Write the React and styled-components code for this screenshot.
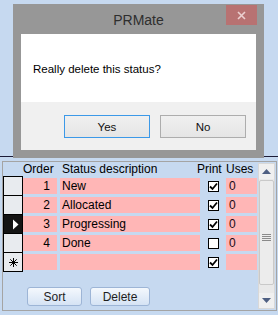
import React from "react";
import styled, { createGlobalStyle } from "styled-components";

const rows = [
  { order: 1, desc: "New", print: true, uses: 0 },
  { order: 2, desc: "Allocated", print: true, uses: 0 },
  { order: 3, desc: "Progressing", print: true, uses: 0, current: true },
  { order: 4, desc: "Done", print: false, uses: 0 },
];

const GlobalStyle = createGlobalStyle`
  html, body {
    margin: 0;
    padding: 0;
  }
  body {
    background: #c6d9f0;
    font-family: "Liberation Sans", Arial, sans-serif;
    color: #000;
  }
`;

const Screen = styled.div`
  position: relative;
  width: 278px;
  height: 315px;
  overflow: hidden;
  background: #c6d9f0;
`;

const FormHeader = styled.div`
  height: 156px;
  border-bottom: 1px solid #1c1c38;
`;

const SubForm = styled.div`
  box-sizing: border-box;
  display: flex;
  margin: 4px 1px 0 2px;
  height: 150px;
  border: 1px solid #a4a4a4;
`;

const Sheet = styled.div`
  flex: 1;
  display: flex;
  flex-direction: column;
  font-size: 12px;
`;

const Row = styled.div`
  display: grid;
  grid-template-columns: 20px 37px 140px 26px 31px;
  height: ${(p) => (p.$head ? "14px" : "19px")};
  align-items: ${(p) => (p.$head ? "center" : "stretch")};
`;

const HeadLabel = styled.div`
  white-space: nowrap;
  line-height: 14px;
  padding-left: ${(p) => p.$pad || 0}px;
  margin-left: ${(p) => p.$shift || 0}px;
`;

const Selector = styled.div`
  box-sizing: border-box;
  display: flex;
  align-items: center;
  justify-content: center;
  padding-left: ${(p) => (p.$current ? "4px" : "0")};
  border-left: 1px solid #000;
  border-right: 1px solid #000;
  border-top: 1px solid #000;
  border-bottom: ${(p) => (p.$last ? "1px solid #000" : "none")};
  height: ${(p) => (p.$last ? "20px" : "19px")};
  background: ${(p) => (p.$current ? "#141414" : "#e8ebef")};
`;

const Cell = styled.div`
  box-sizing: border-box;
  margin-top: 2px;
  height: 16px;
  line-height: 16px;
  background: #ffb6b6;
  white-space: nowrap;
  overflow: hidden;
`;

const OrderCell = styled(Cell)`
  margin-right: 3px;
  text-align: right;
  padding-right: 7px;
`;

const DescCell = styled(Cell)`
  padding-left: 2px;
`;

const UsesCell = styled(Cell)`
  padding-left: 3px;
  color: #1a0a14;
`;

const PrintCell = styled.div`
  display: flex;
  justify-content: center;
  padding-left: 1px;
  margin-top: 5px;
`;

const Box = styled.div`
  box-sizing: border-box;
  width: 11px;
  height: 11px;
  border: 1px solid #000;
  background: #fff;
  display: flex;
  align-items: center;
  justify-content: center;
`;

const ButtonBar = styled.div`
  display: flex;
  gap: 8px;
  margin: 16px 0 0 24px;
`;

const FormButton = styled.button`
  box-sizing: border-box;
  width: ${(p) => p.$w}px;
  height: 19px;
  padding: 0;
  border: 1px solid #9db5d6;
  border-radius: 3px;
  background: linear-gradient(#f4f8fd, #d5e3f4);
  font-family: "Liberation Sans", Arial, sans-serif;
  font-size: 12px;
  color: #1e1e1e;
`;

const ScrollBar = styled.div`
  box-sizing: border-box;
  display: flex;
  flex-direction: column;
  width: 17px;
  margin: 1px 1px 1px 0;
  background: #e9e9e9;
  border: 1px solid #d8d8d8;
`;

const ArrowBtn = styled.div`
  height: 15px;
  display: flex;
  align-items: center;
  justify-content: center;
  background: #f0f0f0;
  margin-top: ${(p) => (p.$down ? "auto" : "0")};
`;

const Thumb = styled.div`
  box-sizing: border-box;
  height: 105px;
  margin: 1px 0 0;
  padding-top: 10px;
  border: 1px solid #c9c9c9;
  border-radius: 2px;
  background: #ececec;
  display: flex;
  align-items: center;
  justify-content: center;
`;

const Dialog = styled.div`
  position: absolute;
  left: 13px;
  top: 4px;
  width: 251px;
  height: 154px;
  box-sizing: border-box;
  padding: 0 8px 8px;
  background: #979797;
  display: flex;
  flex-direction: column;
`;

const TitleBar = styled.div`
  display: grid;
  grid-template-columns: 1fr auto 1fr;
  height: 30px;
`;

const Title = styled.div`
  grid-column: 2;
  align-self: center;
  margin-top: 2px;
  font-size: 14px;
  color: #2e2e2e;
`;

const CloseBtn = styled.div`
  grid-column: 3;
  justify-self: end;
  width: 31px;
  height: 20px;
  margin: 1px -1px 0 0;
  background: #b87272;
  display: flex;
  align-items: center;
  justify-content: center;
`;

const Message = styled.div`
  height: 68px;
  background: #fff;
  box-sizing: border-box;
  padding: 28px 0 0 12px;
  font-size: 11.5px;
  line-height: 14px;
`;

const DialogButtons = styled.div`
  flex: 1;
  background: #f0f0f0;
  display: flex;
  justify-content: flex-end;
  gap: 10px;
  padding: 13px 10px 0 0;
`;

const DialogButton = styled.button`
  box-sizing: border-box;
  width: 86px;
  height: 23px;
  padding: 0;
  border: 1px solid ${(p) => (p.$focus ? "#3c99e8" : "#adadad")};
  background: linear-gradient(#f0f0f0, #e5e5e5);
  font-family: "Liberation Sans", Arial, sans-serif;
  font-size: 11.5px;
  color: #111;
`;

const Check = () => (
  <svg width="9" height="9" viewBox="0 0 9 9">
    <path d="M1 4.5 L3.5 7 L8 1.5" fill="none" stroke="#000" strokeWidth="1.8" />
  </svg>
);

const Pointer = () => (
  <svg width="7" height="11" viewBox="0 0 7 11">
    <path d="M1 0.5 L6.5 5.5 L1 10.5 Z" fill="#fff" />
  </svg>
);

const Star = () => (
  <svg width="9" height="9" viewBox="0 0 9 9">
    <g stroke="#000" strokeWidth="1">
      <path d="M4.5 0 V9 M0 4.5 H9 M1.3 1.3 L7.7 7.7 M7.7 1.3 L1.3 7.7" />
    </g>
  </svg>
);

const Grip = () => (
  <svg width="9" height="8" viewBox="0 0 9 8">
    <g stroke="#8a8a8a" strokeWidth="1">
      <path d="M0 0.5 H9 M0 2.5 H9 M0 4.5 H9 M0 6.5 H9" />
    </g>
  </svg>
);

const Arrow = ({ down }) => (
  <svg width="9" height="5" viewBox="0 0 9 5">
    <path d={down ? "M0 0 H9 L4.5 5 Z" : "M0 5 H9 L4.5 0 Z"} fill="#4e5f82" />
  </svg>
);

const App = () => (
  <Screen>
    <GlobalStyle />
    <FormHeader />
    <SubForm>
      <Sheet>
        <Row $head>
          <div />
          <HeadLabel>Order</HeadLabel>
          <HeadLabel $pad={2}>Status description</HeadLabel>
          <HeadLabel $shift={-3}>Print</HeadLabel>
          <HeadLabel>Uses</HeadLabel>
        </Row>
        {rows.map((r) => (
          <Row key={r.order}>
            <Selector $current={r.current}>{r.current && <Pointer />}</Selector>
            <OrderCell>{r.order}</OrderCell>
            <DescCell>{r.desc}</DescCell>
            <PrintCell>
              <Box>{r.print && <Check />}</Box>
            </PrintCell>
            <UsesCell>{r.uses}</UsesCell>
          </Row>
        ))}
        <Row>
          <Selector $last>
            <Star />
          </Selector>
          <OrderCell />
          <DescCell />
          <PrintCell>
            <Box>
              <Check />
            </Box>
          </PrintCell>
          <UsesCell />
        </Row>
        <ButtonBar>
          <FormButton $w={55}>Sort</FormButton>
          <FormButton $w={60}>Delete</FormButton>
        </ButtonBar>
      </Sheet>
      <ScrollBar>
        <ArrowBtn>
          <Arrow />
        </ArrowBtn>
        <Thumb>
          <Grip />
        </Thumb>
        <ArrowBtn $down>
          <Arrow down />
        </ArrowBtn>
      </ScrollBar>
    </SubForm>

    <Dialog>
      <TitleBar>
        <Title>PRMate</Title>
        <CloseBtn>
          <svg width="9" height="9" viewBox="0 0 9 9">
            <path d="M1 1 L8 8 M8 1 L1 8" stroke="#ecd0d0" strokeWidth="1.6" />
          </svg>
        </CloseBtn>
      </TitleBar>
      <Message>Really delete this status?</Message>
      <DialogButtons>
        <DialogButton $focus>Yes</DialogButton>
        <DialogButton>No</DialogButton>
      </DialogButtons>
    </Dialog>
  </Screen>
);

export default App;
